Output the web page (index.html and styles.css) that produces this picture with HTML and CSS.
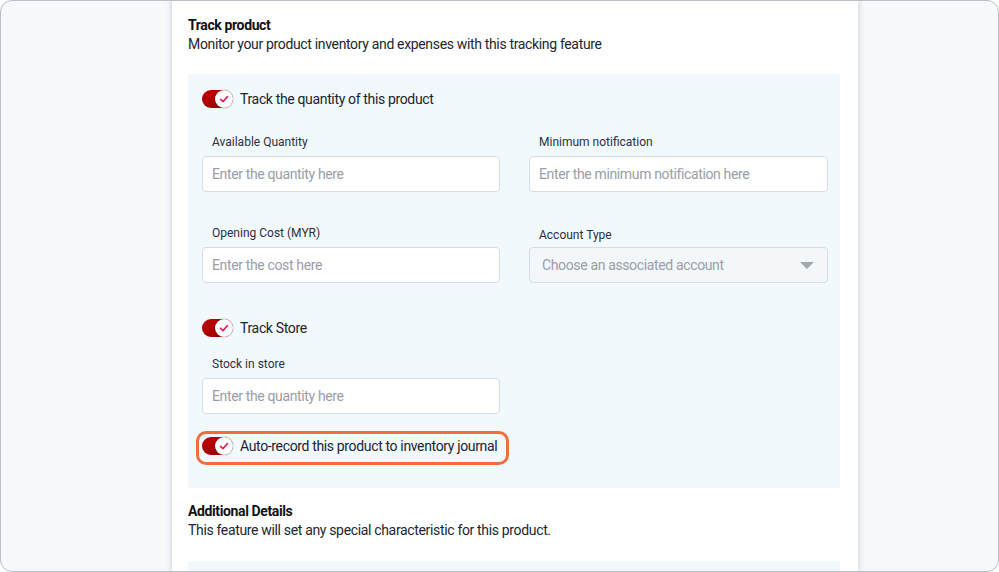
FILE: index.html
```html
<!DOCTYPE html>
<html lang="en">
<head>
<meta charset="utf-8">
<title>Track product</title>
<link rel="stylesheet" href="styles.css">
</head>
<body>
<div class="frame">
  <main class="panel">
    <h2 class="sec-title">Track product</h2>
    <p class="sec-sub">Monitor your product inventory and expenses with this tracking feature</p>

    <section class="box">
      <div class="toggle-row">
        <span class="toggle"><span class="knob"><svg viewBox="0 0 16 16" width="16" height="16"><path d="M4.6 8.3 L7 10.6 L11.4 5.6" fill="none" stroke="#e8245c" stroke-width="1.7" stroke-linecap="round" stroke-linejoin="round"/></svg></span></span>
        <span class="toggle-text">Track the quantity of this product</span>
      </div>

      <div class="grid first">
        <div class="field">
          <label class="lbl">Available Quantity</label>
          <div class="input">Enter the quantity here</div>
        </div>
        <div class="field">
          <label class="lbl">Minimum notification</label>
          <div class="input">Enter the minimum notification here</div>
        </div>
        <div class="field">
          <label class="lbl">Opening Cost (MYR)</label>
          <div class="input">Enter the cost here</div>
        </div>
        <div class="field">
          <label class="lbl lbl-low">Account Type</label>
          <div class="input select"><span>Choose an associated account</span><span class="caret"></span></div>
        </div>
      </div>

      <div class="toggle-row store">
        <span class="toggle"><span class="knob"><svg viewBox="0 0 16 16" width="16" height="16"><path d="M4.6 8.3 L7 10.6 L11.4 5.6" fill="none" stroke="#e8245c" stroke-width="1.7" stroke-linecap="round" stroke-linejoin="round"/></svg></span></span>
        <span class="toggle-text">Track Store</span>
      </div>

      <div class="grid single">
        <div class="field">
          <label class="lbl">Stock in store</label>
          <div class="input">Enter the quantity here</div>
        </div>
      </div>

      <div class="toggle-row auto">
        <span class="highlight"></span>
        <span class="toggle"><span class="knob"><svg viewBox="0 0 16 16" width="16" height="16"><path d="M4.6 8.3 L7 10.6 L11.4 5.6" fill="none" stroke="#e8245c" stroke-width="1.7" stroke-linecap="round" stroke-linejoin="round"/></svg></span></span>
        <span class="toggle-text">Auto-record this product to inventory journal</span>
      </div>
    </section>

    <h2 class="sec-title second">Additional Details</h2>
    <p class="sec-sub">This feature will set any special characteristic for this product.</p>
    <section class="box next"></section>
  </main>
</div>
</body>
</html>
```

FILE: styles.css
```css
* { box-sizing: border-box; margin: 0; padding: 0; }
html, body { width: 999px; height: 572px; overflow: hidden; }
body { font-family: Roboto, "Liberation Sans", Arial, sans-serif; background: #ffffff; color: #1f2430; }

.frame {
  width: 999px;
  height: 572px;
  border: 1px solid #bcbec8;
  border-radius: 12px;
  background: #f7f8fc;
  overflow: hidden;
  display: flex;
}

.panel {
  width: 686px;
  margin-left: 171px;
  margin-top: -1px;
  background: #ffffff;
  box-shadow: -2px 0 4px rgba(0,0,0,0.10), 2px 0 5px rgba(0,0,0,0.10);
  padding: 16px 18px 0 16px;
}

.sec-title {
  font-size: 14px;
  font-weight: 700;
  line-height: 18px;
  letter-spacing: -0.38px;
  color: #111111;
}
.sec-title.second { margin-top: 14px; }
.sec-sub {
  font-size: 14px;
  line-height: 20px;
  letter-spacing: -0.34px;
  color: #222631;
}

.box {
  margin-top: 20px;
  background: #f2f9fd;
  padding: 15px 12px 32px 14px;
}
.box.next { margin-top: 21px; height: 40px; padding: 0; }

.toggle-row {
  display: flex;
  align-items: center;
  gap: 7px;
  height: 20px;
  position: relative;
  width: max-content;
}
.toggle-row.store { margin-top: 35px; }
.toggle-row.auto { margin-top: 22px; }

.toggle {
  width: 31px;
  height: 18px;
  border-radius: 9px;
  background: linear-gradient(#bd0000, #a30000);
  position: relative;
  flex: none;
}
.knob {
  position: absolute;
  right: 0;
  top: 0;
  width: 18px;
  height: 18px;
  border-radius: 50%;
  background: #ffffff;
  box-shadow: 0 0 2px rgba(0,0,0,0.35);
  display: flex;
  align-items: center;
  justify-content: center;
}
.knob svg { display: block; }

.toggle-text {
  font-size: 14px;
  line-height: 20px;
  letter-spacing: -0.35px;
  color: #1d2230;
}

.highlight {
  position: absolute;
  left: -6px;
  right: -12px;
  top: -5px;
  bottom: -9px;
  border: 3px solid #f26d3d;
  border-radius: 10px;
  pointer-events: none;
}

.grid {
  display: grid;
  grid-template-columns: 298px 299px;
  column-gap: 29px;
  row-gap: 33px;
}
.grid.first { margin-top: 25px; }
.grid.single { margin-top: 18px; }

.field { display: flex; flex-direction: column; }
.lbl {
  font-size: 12px;
  line-height: 16px;
  color: #2a3040;
  padding-left: 10px;
  margin-bottom: 6px;
}
.lbl-low { padding-top: 2px; margin-bottom: 4px; }

.input {
  height: 36px;
  border: 1px solid #d9dde2;
  border-radius: 4px;
  background: #ffffff;
  padding: 0 9px;
  display: flex;
  align-items: center;
  font-size: 14px;
  letter-spacing: -0.36px;
  color: #9a9ea6;
}
.select {
  background: #f3f7fa;
  justify-content: space-between;
  padding: 0 13px 0 12px;
}
.caret {
  width: 0;
  height: 0;
  border-left: 7px solid transparent;
  border-right: 7px solid transparent;
  border-top: 7px solid #a3a7ae;
}
```
